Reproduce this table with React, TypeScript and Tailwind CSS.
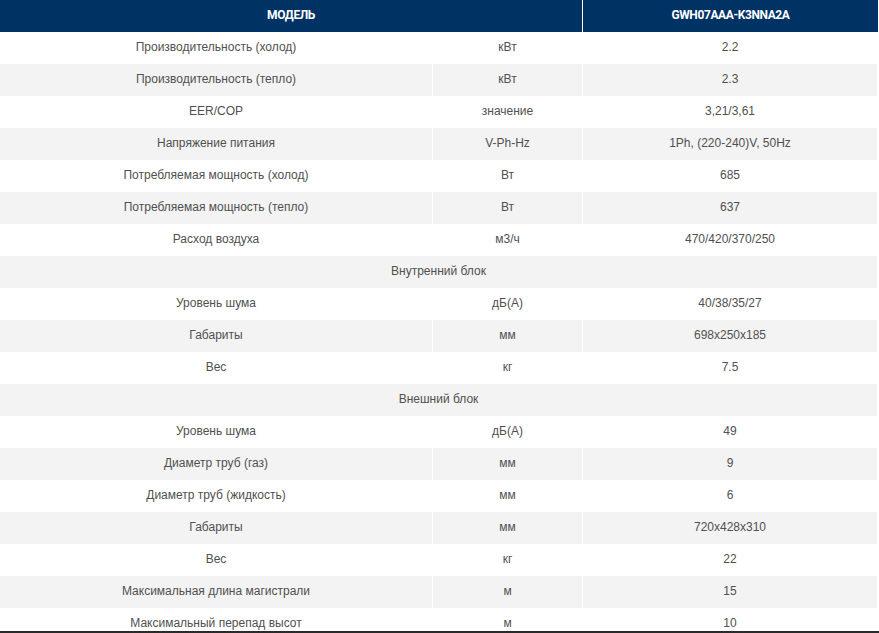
import React from "react";

type Row =
  | { kind: "data"; name: string; unit: string; value: string }
  | { kind: "section"; title: string };

const rows: Row[] = [
  { kind: "data", name: "Производительность (холод)", unit: "кВт", value: "2.2" },
  { kind: "data", name: "Производительность (тепло)", unit: "кВт", value: "2.3" },
  { kind: "data", name: "EER/COP", unit: "значение", value: "3,21/3,61" },
  { kind: "data", name: "Напряжение питания", unit: "V-Ph-Hz", value: "1Ph, (220-240)V, 50Hz" },
  { kind: "data", name: "Потребляемая мощность (холод)", unit: "Вт", value: "685" },
  { kind: "data", name: "Потребляемая мощность (тепло)", unit: "Вт", value: "637" },
  { kind: "data", name: "Расход воздуха", unit: "м3/ч", value: "470/420/370/250" },
  { kind: "section", title: "Внутренний блок" },
  { kind: "data", name: "Уровень шума", unit: "дБ(А)", value: "40/38/35/27" },
  { kind: "data", name: "Габариты", unit: "мм", value: "698х250х185" },
  { kind: "data", name: "Вес", unit: "кг", value: "7.5" },
  { kind: "section", title: "Внешний блок" },
  { kind: "data", name: "Уровень шума", unit: "дБ(А)", value: "49" },
  { kind: "data", name: "Диаметр труб (газ)", unit: "мм", value: "9" },
  { kind: "data", name: "Диаметр труб (жидкость)", unit: "мм", value: "6" },
  { kind: "data", name: "Габариты", unit: "мм", value: "720х428х310" },
  { kind: "data", name: "Вес", unit: "кг", value: "22" },
  { kind: "data", name: "Максимальная длина магистрали", unit: "м", value: "15" },
  { kind: "data", name: "Максимальный перепад высот", unit: "м", value: "10" },
];

export default function App() {
  return (
    <div
      className="relative w-[879px] h-[633px] overflow-hidden bg-white text-[12px] text-[#505050]"
      style={{ fontFamily: '"Liberation Sans", Arial, sans-serif' }}
    >
      <div className="flex h-[32px] w-[878px] bg-[#003263] text-white font-bold text-[12px] tracking-[-0.4px]" style={{ fontFamily: 'Roboto, "Liberation Sans", sans-serif' }}>
        <div className="w-[582px] flex items-center justify-center pb-[2px]">МОДЕЛЬ</div>
        <div className="w-[1px] bg-white" />
        <div className="flex-1 flex items-center justify-center pb-[2px]">GWH07AAA-K3NNA2A</div>
      </div>
      {rows.map((r, i) => {
        const bg = i % 2 === 1 ? "bg-[#f3f3f3]" : "bg-white";
        if (r.kind === "section") {
          return (
            <div key={i} className={`flex h-[32px] w-[877px] items-center justify-center pb-[2px] ${bg}`}>
              {r.title}
            </div>
          );
        }
        return (
          <div key={i} className="flex h-[32px] w-[877px]">
            <div className={`w-[432px] flex items-center justify-center pb-[2px] ${bg}`}>{r.name}</div>
            <div className="w-[1px] bg-white" />
            <div className={`w-[149px] flex items-center justify-center pb-[2px] ${bg}`}>{r.unit}</div>
            <div className="w-[1px] bg-white" />
            <div className={`flex-1 flex items-center justify-center pb-[2px] ${bg}`}>{r.value}</div>
          </div>
        );
      })}
      <div className="absolute left-0 bottom-0 w-full h-[2px] bg-[#2a2a2a]" />
    </div>
  );
}
